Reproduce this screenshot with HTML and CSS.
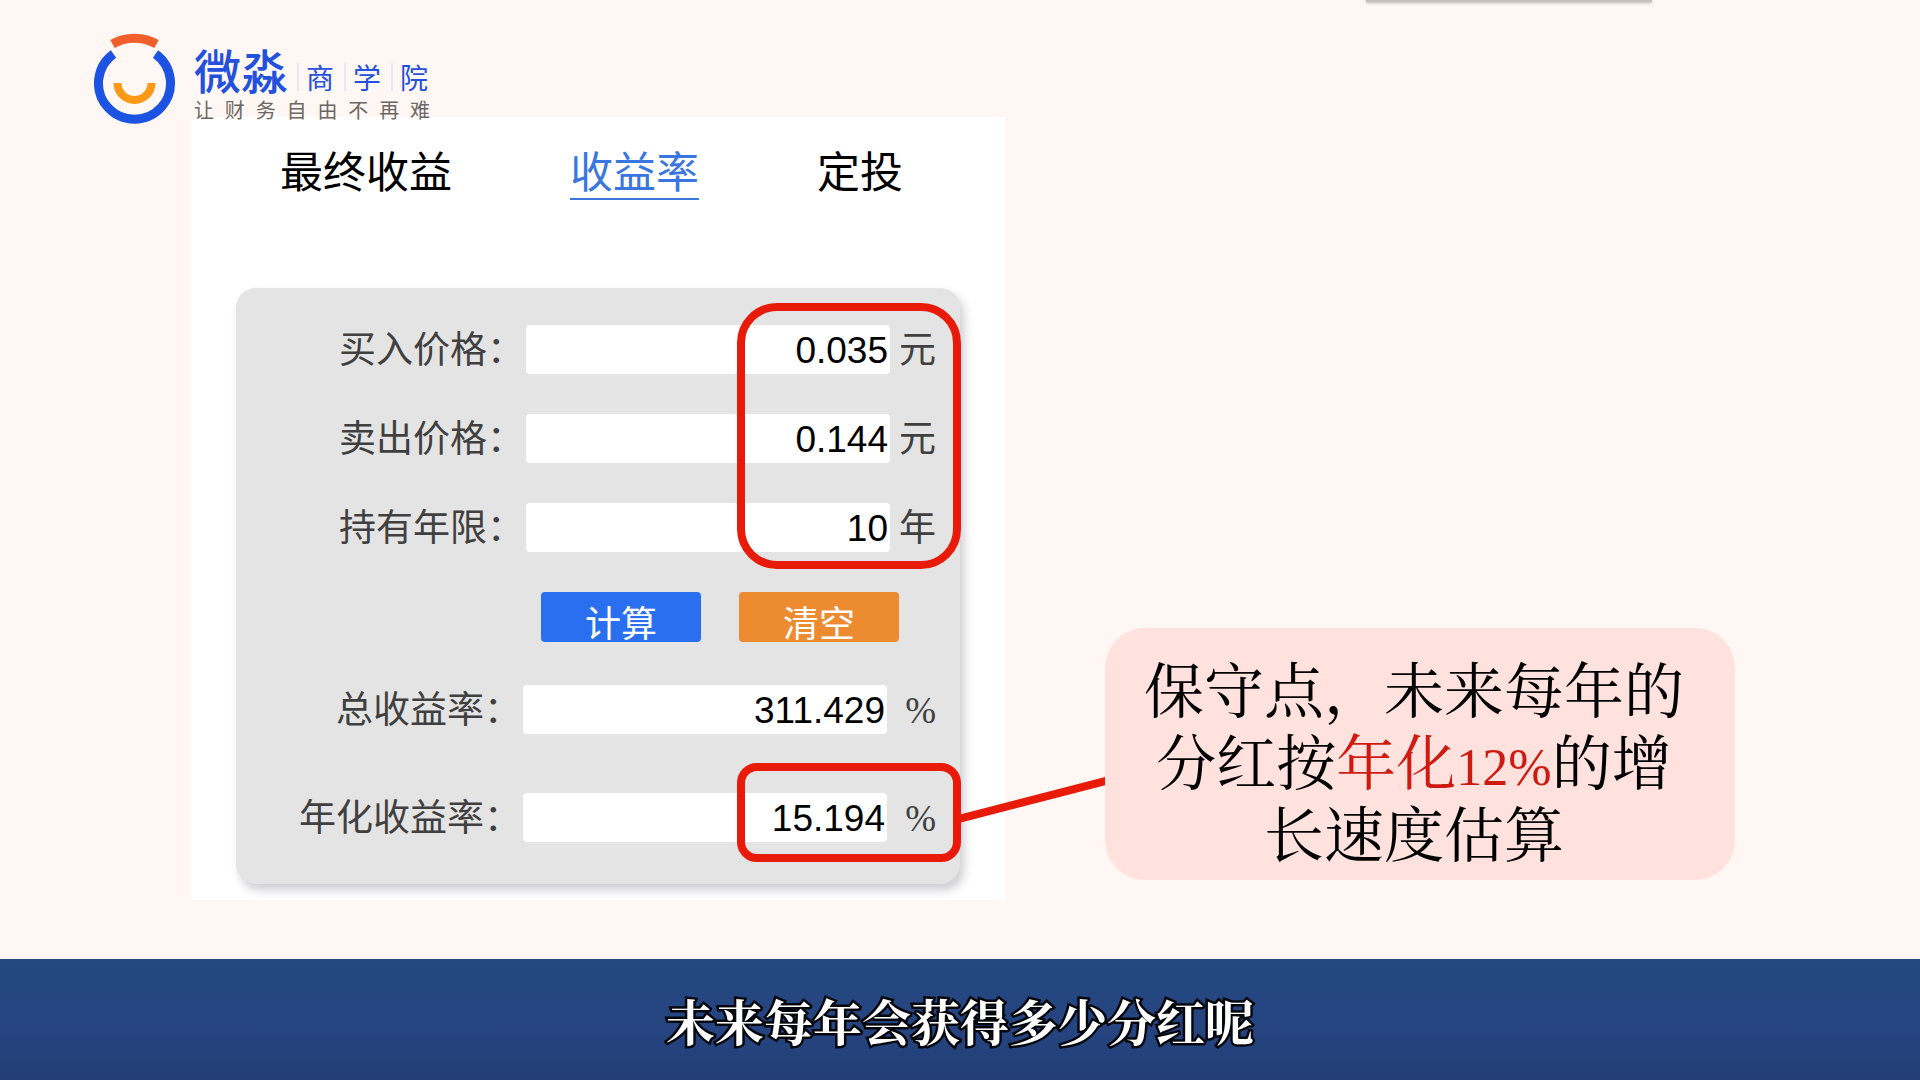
FILE: index.html
```html
<!DOCTYPE html>
<html lang="zh-CN">
<head>
<meta charset="utf-8">
<meta name="viewport" content="width=device-width, initial-scale=1">
<title>微淼商学院 - 收益率</title>
<link rel="stylesheet" href="styles.css">
</head>
<body>
<div class="top-shade"></div>
<header class="brand">
  <svg class="brand-mark" viewBox="0 0 82 94" aria-hidden="true">
    <path d="M19.5 24A36 36 0 1 0 61.500 24" fill="none" stroke="#1d53e3" stroke-width="9"/>
    <path d="M18.500 14A45 45 0 0 1 62.500 14" fill="none" stroke="#f15f2b" stroke-width="9"/>
    <path d="M23.500 53A17 17 0 0 0 57.500 53" fill="none" stroke="#fc9a17" stroke-width="8"/>
  </svg>
  <div class="brand-text">
    <div class="brand-name">
      <strong class="brand-main">微淼</strong>
      <span class="brand-part">商</span>
      <span class="brand-part">学</span>
      <span class="brand-part">院</span>
    </div>
    <p class="brand-line">让 财 务 自 由 不 再 难</p>
  </div>
</header>

<main class="board">
  <section class="sheet">
    <nav class="tabs">
      <a class="tab" href="#final">最终收益</a>
      <a class="tab tab-active" href="#rate" aria-current="page">收益率</a>
      <a class="tab" href="#plan">定投</a>
    </nav>
    <form class="panel">
      <div class="fields">
        <div class="row">
          <label for="buy">买入价格：</label>
          <input id="buy" type="text" value="0.035">
          <span class="unit">元</span>
        </div>
        <div class="row">
          <label for="sell">卖出价格：</label>
          <input id="sell" type="text" value="0.144">
          <span class="unit">元</span>
        </div>
        <div class="row">
          <label for="years">持有年限：</label>
          <input id="years" type="text" value="10">
          <span class="unit">年</span>
        </div>
        <div class="marker marker-large"></div>
      </div>
      <div class="actions">
        <button class="btn btn-calc" type="button">计算</button>
        <button class="btn btn-clear" type="button">清空</button>
      </div>
      <div class="results">
        <div class="row row-result">
          <label for="total">总收益率：</label>
          <input id="total" type="text" value="311.429" readonly>
          <span class="unit unit-percent">%</span>
        </div>
        <div class="row row-result">
          <label for="annual">年化收益率：</label>
          <input id="annual" type="text" value="15.194" readonly>
          <span class="unit unit-percent">%</span>
          <div class="marker marker-small">
            <svg class="connector" viewBox="0 0 150 50" aria-hidden="true">
              <path d="M0 45L150 6" stroke="#e81b09" stroke-width="8"/>
            </svg>
          </div>
        </div>
      </div>
    </form>
  </section>

  <aside class="callout">
    <p>保守点，未来每年的<br>分红按<em>年化<span class="figure">12%</span></em>的增<br>长速度估算</p>
  </aside>
</main>

<footer class="caption">
  <p>未来每年会获得多少分红呢</p>
</footer>
</body>
</html>
```
FILE: styles.css
```css
* {
  box-sizing: border-box;
}

body {
  margin: 0;
  min-height: 100vh;
  display: flex;
  flex-direction: column;
  position: relative;
  overflow-x: hidden;
  background: #fff7f4;
  color: #000;
  font-family: "Liberation Sans", "Noto Sans CJK SC", sans-serif;
}

p {
  margin: 0;
}

/* lower edge of a panel that sits above the page */
.top-shade {
  position: absolute;
  top: 0;
  right: 268px;
  width: 286px;
  height: 2px;
  background: #c6bfbc;
  box-shadow: 0 1px 3px #b5aeab;
}

/* brand */
.brand {
  position: absolute;
  z-index: 2;
  top: 30px;
  left: 94px;
  display: flex;
  gap: 18px;
}

.brand-mark {
  width: 82px;
  height: 94px;
}

.brand-text {
  padding-top: 14px;
}

.brand-name {
  display: flex;
  align-items: flex-end;
  color: #2350dc;
  font-family: "Noto Sans CJK SC", sans-serif;
}

.brand-main {
  width: 103px;
  font-size: 47px;
  font-weight: 500;
  line-height: 50px;
}

.brand-part {
  width: 47px;
  padding-left: 7px;
  border-left: 2px solid #ece4f0;
  font-size: 28px;
  line-height: 28px;
  margin-bottom: 3px;
}

.brand-line {
  width: 236px;
  color: #6b6663;
  font-family: "Noto Sans CJK SC", sans-serif;
  font-size: 20px;
  line-height: 32px;
  text-align-last: justify;
}

/* board */
.board {
  flex: 1;
  display: grid;
  grid-template-columns: 814fr 630fr;
  column-gap: 100px;
  align-items: end;
  align-content: start;
  padding: 117px 185px 59px 191px;
}

.sheet {
  padding: 32px 45px 16px;
  background: #fff;
}

.tabs {
  display: flex;
  justify-content: space-between;
  padding: 0 57px 0 44px;
  margin-bottom: 88px;
}

.tab {
  border-bottom: 2px solid transparent;
  color: #000;
  font-size: 43px;
  line-height: 49px;
  text-decoration: none;
}

.tab-active {
  border-color: #3a76e0;
  color: #3a76e0;
}

.panel {
  padding: 37px 24px 42px 0;
  border-radius: 20px;
  background: #e4e4e4;
  box-shadow: 4px 6px 10px rgba(60, 60, 80, 0.25);
}

.fields,
.results {
  display: grid;
  position: relative;
  gap: 40px;
}

.results {
  gap: 59px;
}

.row {
  position: relative;
  display: grid;
  grid-template-columns: 290fr 364fr 46px;
  align-items: center;
}

.row-result {
  grid-template-columns: 287fr 364fr 49px;
}

.row label,
.unit {
  padding-top: 3px;
  color: #404040;
  font-size: 37px;
  line-height: 46px;
  text-align: right;
  white-space: nowrap;
}

.row label {
  padding-right: 2px;
}

.row input {
  width: 100%;
  height: 49px;
  padding: 2px 2px 0;
  border: 0;
  border-radius: 4px;
  background: #fff;
  color: #000;
  font-family: inherit;
  font-size: 37px;
  text-align: right;
}

.unit-percent {
  font-family: "Liberation Serif", serif;
}

.actions {
  display: flex;
  justify-content: flex-end;
  gap: 38px;
  margin: 40px 37px 43px 0;
}

.btn {
  width: 160px;
  height: 50px;
  padding: 15px 0 0;
  border: 0;
  border-radius: 4px;
  color: #fff;
  font-family: inherit;
  font-size: 36px;
  line-height: 35px;
}

.btn-calc {
  background: #296ff0;
}

.btn-clear {
  background: #ed8b31;
}

/* red annotations over the form */
.marker {
  position: absolute;
  right: -25px;
  width: 224px;
  border: 8px solid #e81b09;
}

.marker-large {
  top: -22px;
  bottom: -17px;
  border-radius: 40px;
}

.marker-small {
  top: -30px;
  bottom: -20px;
  border-radius: 20px;
}

.connector {
  position: absolute;
  top: 3px;
  left: 100%;
  width: 150px;
  height: 50px;
  margin-left: 6px;
}

.callout {
  position: relative;
  z-index: 1;
  margin-bottom: 20px;
  padding: 29px 24px 7px 12px;
  border-radius: 40px;
  background: #ffe1de;
  font-family: "Liberation Serif", "Noto Serif CJK SC", "Noto Sans CJK SC", serif;
  font-size: 60px;
  line-height: 72px;
  text-align: center;
  white-space: nowrap;
}

.callout em {
  color: #cf1a12;
  font-style: normal;
}

.figure {
  font-size: 52px;
  line-height: 52px;
}

/* caption */
.caption {
  display: grid;
  place-items: center;
  min-height: 121px;
  background: linear-gradient(#24487f, #254480 60%, #223e74);
}

.caption p {
  color: #fff;
  font-family: "Noto Serif CJK SC", "Noto Sans CJK SC", serif;
  font-size: 49px;
  font-weight: 700;
  line-height: 60px;
  -webkit-text-stroke: 5px #05070c;
  paint-order: stroke fill;
}
```
